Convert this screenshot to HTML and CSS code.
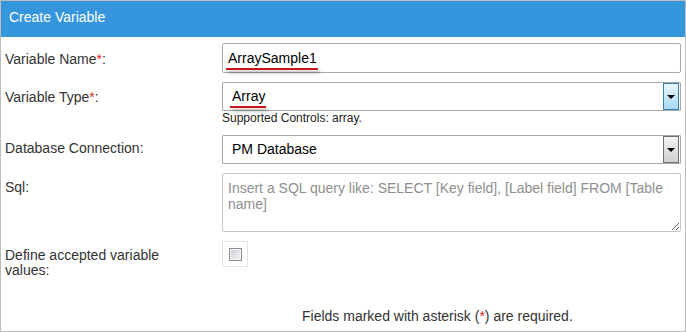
FILE: index.html
```html
<!DOCTYPE html>
<html lang="en">
<head>
<meta charset="utf-8">
<title>Create Variable</title>
<link rel="stylesheet" href="styles.css">
</head>
<body>
<div class="panel">
  <div class="panel-header">Create Variable</div>
  <div class="form">
    <div class="label label-r1">Variable Name<span class="req">*</span>:</div>
    <div class="field">
      <div class="input"><span class="mark mark-name">ArraySample1</span></div>
    </div>

    <div class="label label-r2">Variable Type<span class="req">*</span>:</div>
    <div class="field">
      <div class="select">
        <span class="select-value"><span class="mark mark-type">Array</span></span>
        <span class="select-btn select-btn-active"><span class="caret"></span></span>
      </div>
      <div class="help">Supported Controls: array.</div>
    </div>

    <div class="label label-r3">Database Connection:</div>
    <div class="field">
      <div class="select">
        <span class="select-value">PM Database</span>
        <span class="select-btn"><span class="caret"></span></span>
      </div>
    </div>

    <div class="label label-r4">Sql:</div>
    <div class="field">
      <textarea class="textarea" placeholder="Insert a SQL query like: SELECT [Key field], [Label field] FROM [Table name]"></textarea>
    </div>

    <div class="label label-r5">Define accepted variable values:</div>
    <div class="field">
      <div class="check-wrap"><span class="check"></span></div>
    </div>

    <div class="footer">Fields marked with asterisk (<span class="req">*</span>) are required.</div>
  </div>
</div>
</body>
</html>
```
FILE: styles.css
```css
html, body {
  margin: 0;
  padding: 0;
  background: #ffffff;
}

body {
  font-family: "Liberation Sans", Arial, sans-serif;
  color: #333333;
}

.panel {
  width: 686px;
  height: 332px;
  box-sizing: border-box;
  border: 1px solid #bdbdbd;
  background: #ffffff;
}

.panel-header {
  height: 36px;
  background: #3596de;
  color: #ffffff;
  font-size: 14px;
  line-height: 32px;
  padding-left: 8px;
}

.form {
  display: grid;
  grid-template-columns: 217px 459px;
  row-gap: 9px;
  padding: 6px 4px 0 4px;
}

.label {
  font-size: 14px;
  line-height: 15px;
  color: #333333;
  max-width: 178px;
}

.label-r1 { padding-top: 9px; }
.label-r2 { padding-top: 8px; }
.label-r3 { padding-top: 6px; }
.label-r4 { padding-top: 7px; }
.label-r5 { padding-top: 7px; }

.req {
  color: #e3261b;
}

.field {
  display: flex;
  flex-direction: column;
}

.input {
  height: 30px;
  box-sizing: border-box;
  border: 1px solid #a9a9a9;
  border-radius: 2px;
  padding: 0 5px;
  font-size: 14px;
  line-height: 28px;
  color: #000000;
}

.mark {
  position: relative;
}

.mark::after {
  content: "";
  position: absolute;
  left: -2px;
  right: -1px;
  bottom: -4px;
  height: 2px;
  background: #c8141b;
  box-shadow: 2px 3px 3px rgba(0, 0, 0, 0.35);
}

.select {
  height: 29px;
  box-sizing: border-box;
  border: 1px solid #a9a9a9;
  border-radius: 1px;
  display: flex;
  align-items: stretch;
  font-size: 14px;
  color: #000000;
}

.select-value {
  flex: 1;
  padding-left: 9px;
  line-height: 26px;
}

.select-btn {
  width: 16px;
  box-sizing: border-box;
  margin-right: 1px;
  border: 1px solid #707070;
  background: linear-gradient(#f3f3f3, #d0d0d0);
  display: flex;
  align-items: center;
  justify-content: center;
}

.select-btn-active {
  border-color: #3c7fb1;
  background: linear-gradient(#eaf6fd, #a7d9f5);
}

.caret {
  width: 0;
  height: 0;
  border-left: 4px solid transparent;
  border-right: 4px solid transparent;
  border-top: 4px solid #000000;
  margin-top: 1px;
}

.help {
  font-size: 12px;
  line-height: 15px;
  color: #222222;
}

.textarea {
  display: block;
  height: 59px;
  box-sizing: border-box;
  border: 1px solid #c6c6c6;
  border-radius: 2px;
  padding: 6px 5px;
  margin: 0;
  font-family: "Liberation Sans", Arial, sans-serif;
  font-size: 14px;
  line-height: 16px;
  color: #000000;
  resize: both;
}

.textarea::placeholder {
  color: #8f8f8f;
}

.check-wrap {
  width: 26px;
  height: 26px;
  box-sizing: border-box;
  border: 1px solid #e3e3e3;
  display: flex;
  align-items: center;
  justify-content: center;
}

.check {
  width: 13px;
  height: 13px;
  box-sizing: border-box;
  border: 1px solid #8a8a8a;
  box-shadow: inset 0 0 0 1px #f4f4f4;
  background: linear-gradient(135deg, #c9ced6, #f6f6f6);
}

.footer {
  grid-column: 2;
  margin-top: 21px;
  padding-left: 80px;
  font-size: 14px;
  line-height: 16px;
  color: #333333;
}
```
